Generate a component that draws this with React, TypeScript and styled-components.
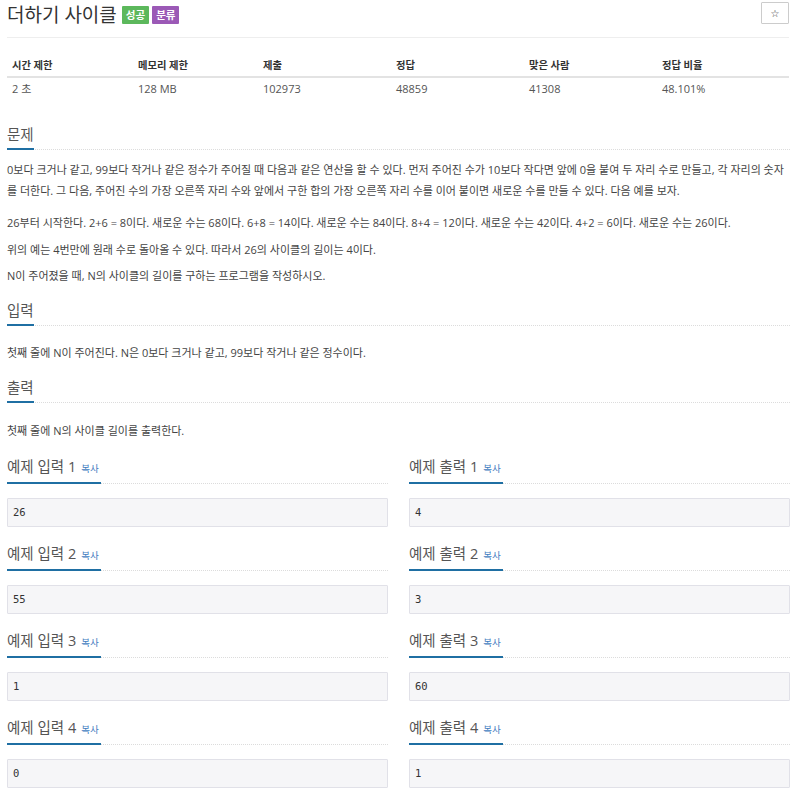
import React from "react";
import styled, { createGlobalStyle } from "styled-components";

interface Stat {
  label: string;
  value: string;
}
interface SampleData {
  title: string;
  value: string;
}

const stats: Stat[] = [
  { label: "시간 제한", value: "2 초" },
  { label: "메모리 제한", value: "128 MB" },
  { label: "제출", value: "102973" },
  { label: "정답", value: "48859" },
  { label: "맞은 사람", value: "41308" },
  { label: "정답 비율", value: "48.101%" },
];

const samples: SampleData[] = [
  { title: "예제 입력 1", value: "26" },
  { title: "예제 출력 1", value: "4" },
  { title: "예제 입력 2", value: "55" },
  { title: "예제 출력 2", value: "3" },
  { title: "예제 입력 3", value: "1" },
  { title: "예제 출력 3", value: "60" },
  { title: "예제 입력 4", value: "0" },
  { title: "예제 출력 4", value: "1" },
];

const Headline = ({ title, copy }: { title: string; copy?: boolean }) => (
  <HeadRow>
    <HeadTitle>
      {title}
      {copy && <CopyLink>복사</CopyLink>}
    </HeadTitle>
  </HeadRow>
);

const App = () => {
  return (
    <Page>
      <GlobalStyle />
      <TitleBar>
        <Title>
          더하기 사이클
          <Badge $color="#5cb85c">성공</Badge>
          <Badge $color="#9b59b6">분류</Badge>
        </Title>
        <StarButton>☆</StarButton>
      </TitleBar>

      <StatsTable>
        {stats.map((s) => (
          <HeadCell key={s.label}>{s.label}</HeadCell>
        ))}
        {stats.map((s) => (
          <Cell key={s.label}>{s.value}</Cell>
        ))}
      </StatsTable>

      <Section $top={23}>
        <Headline title="문제" />
        <Body $top={9}>
          <P $after={11}>
            0보다 크거나 같고, 99보다 작거나 같은 정수가 주어질 때 다음과 같은 연산을 할 수 있다. 먼저 주어진 수가 10보다 작다면 앞에 0을 붙여 두 자리 수로 만들고, 각 자리의 숫자를 더한다. 그 다음, 주어진 수의 가장 오른쪽 자리 수와 앞에서 구한 합의 가장 오른쪽 자리 수를 이어 붙이면 새로운 수를 만들 수 있다. 다음 예를 보자.
          </P>
          <P>
            26부터 시작한다. 2+6 = 8이다. 새로운 수는 68이다. 6+8 = 14이다. 새로운 수는 84이다. 8+4 = 12이다. 새로운 수는 42이다. 4+2 = 6이다. 새로운 수는 26이다.
          </P>
          <P $after={5}>위의 예는 4번만에 원래 수로 돌아올 수 있다. 따라서 26의 사이클의 길이는 4이다.</P>
          <P $after={0}>N이 주어졌을 때, N의 사이클의 길이를 구하는 프로그램을 작성하시오.</P>
        </Body>
      </Section>

      <Section $top={12.5}>
        <Headline title="입력" />
        <Body $top={16}>
          <P $after={0}>첫째 줄에 N이 주어진다. N은 0보다 크거나 같고, 99보다 작거나 같은 정수이다.</P>
        </Body>
      </Section>

      <Section $top={13}>
        <Headline title="출력" />
        <Body $top={17}>
          <P $after={0}>첫째 줄에 N의 사이클 길이를 출력한다.</P>
        </Body>
      </Section>

      <SampleGrid>
        {samples.map((s) => (
          <Sample key={s.title}>
            <Headline title={s.title} copy />
            <SampleBox>{s.value}</SampleBox>
          </Sample>
        ))}
      </SampleGrid>
    </Page>
  );
};

export default App;

const GlobalStyle = createGlobalStyle`
  body {
    margin: 0;
    background: #fff;
    color: #333;
    font-family: "Open Sans", "Noto Sans CJK KR", sans-serif;
  }
`;

const Page = styled.div`
  width: 795px;
  box-sizing: border-box;
  padding: 0 5px 0 7px;
`;

const TitleBar = styled.div`
  display: flex;
  justify-content: space-between;
  align-items: flex-start;
  padding-bottom: 9px;
  border-bottom: 1px solid #eee;
  margin-right: 1px;
`;

const Title = styled.h1`
  margin: 0;
  display: flex;
  align-items: center;
  gap: 3px;
  height: 28px;
  font-size: 19px;
  font-weight: 400;
  color: #333;
  > span:first-of-type {
    margin-left: 2px;
  }
`;

const Badge = styled.span<{ $color: string }>`
  display: inline-block;
  height: 18px;
  line-height: 18px;
  padding: 0 4px;
  margin-top: 2px;
  background: ${(p) => p.$color};
  color: #fff;
  font-size: 10.5px;
  font-weight: 700;
  border-radius: 1px;
`;

const StarButton = styled.button`
  margin-top: 2px;
  width: 28px;
  height: 22px;
  padding: 0;
  background: #fff;
  border: 1px solid #ccc;
  border-radius: 1px;
  color: #333;
  font-family: "DejaVu Sans", sans-serif;
  font-size: 10px;
`;

const StatsTable = styled.div`
  display: grid;
  grid-template-columns: 126px 125px 133px 133px 133px 1fr;
  margin-top: 16px;
  margin-right: 1px;
  line-height: 14px;
`;

const HeadCell = styled.div`
  padding: 4px 5px;
  font-size: 10.3px;
  font-weight: 700;
  color: #333;
  border-bottom: 2px solid #e3e3e3;
`;

const Cell = styled.div`
  padding: 4px 5px;
  font-size: 11px;
  color: #555;
`;

const Section = styled.section<{ $top: number }>`
  margin-top: ${(p) => p.$top}px;
`;

const HeadRow = styled.div`
  border-bottom: 1px dotted #dcdcdc;
`;

const HeadTitle = styled.h2`
  display: inline-flex;
  align-items: baseline;
  margin: 0 0 -1px;
  padding-bottom: 3px;
  line-height: 20px;
  font-size: 14.5px;
  font-weight: 400;
  color: #555;
  border-bottom: 2px solid #1f6fa3;
`;

const CopyLink = styled.a`
  margin-left: 5px;
  padding-right: 2px;
  font-size: 9.5px;
  color: #3f7cc0;
  cursor: pointer;
`;

const Body = styled.div<{ $top: number }>`
  margin-top: ${(p) => p.$top}px;
  font-size: 11px;
  line-height: 21px;
  color: #444;
`;

const P = styled.p<{ $after?: number }>`
  margin: 0 0 ${(p) => (p.$after ?? 6)}px;
`;

const SampleGrid = styled.div`
  display: grid;
  grid-template-columns: 1fr 1fr;
  column-gap: 21px;
  margin-top: 14px;
`;

const Sample = styled.div`
  padding-bottom: 15px;
`;

const SampleBox = styled.pre`
  margin: 14px 0 0;
  padding: 7px 5px;
  height: 13px;
  line-height: 13px;
  background: #f6f6f8;
  border: 1px solid #e1e1e8;
  border-radius: 1px;
  color: #333;
  font-family: "DejaVu Sans Mono", monospace;
  font-size: 10.5px;
`;
